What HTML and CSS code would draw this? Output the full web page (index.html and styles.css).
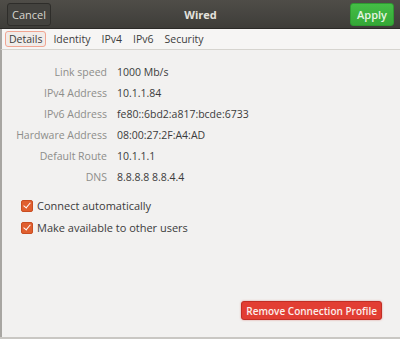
FILE: index.html
```html
<!DOCTYPE html>
<html lang="en">
<head>
    <meta charset="UTF-8">
    <title>Wired</title>
    <link rel="stylesheet" href="styles.css">
</head>
<body>
    <div class="window">
        <div class="headerbar">
            <button class="hb-btn btn-cancel">Cancel</button>
            <div class="title">Wired</div>
            <button class="hb-btn btn-apply">Apply</button>
        </div>
        <div class="tabs">
            <span class="tab active">Details</span>
            <span class="tab">Identity</span>
            <span class="tab">IPv4</span>
            <span class="tab">IPv6</span>
            <span class="tab">Security</span>
        </div>
        <div class="content">
            <div class="details">
                <div class="label">Link speed</div><div class="value">1000 Mb/s</div>
                <div class="label">IPv4 Address</div><div class="value">10.1.1.84</div>
                <div class="label">IPv6 Address</div><div class="value">fe80::6bd2:a817:bcde:6733</div>
                <div class="label">Hardware Address</div><div class="value">08:00:27:2F:A4:AD</div>
                <div class="label">Default Route</div><div class="value">10.1.1.1</div>
                <div class="label">DNS</div><div class="value">8.8.8.8 8.8.4.4</div>
            </div>
            <div class="checks">
                <label class="check"><span class="box"></span>Connect automatically</label>
                <label class="check"><span class="box"></span>Make available to other users</label>
            </div>
            <div class="footer">
                <button class="btn-remove">Remove Connection Profile</button>
            </div>
        </div>
    </div>
</body>
</html>
```

FILE: styles.css
```css
html, body {
    margin: 0;
    padding: 0;
}

body {
    width: 400px;
    height: 339px;
    background: #f2f1f0;
    font-family: "Open Sans", "DejaVu Sans", sans-serif;
    font-size: 10.5px;
    overflow: hidden;
}

.window {
    height: 339px;
    display: flex;
    flex-direction: column;
    box-sizing: border-box;
    border-bottom: 2px solid #c9c7c3;
}

.headerbar {
    height: 29px;
    display: flex;
    align-items: center;
    justify-content: space-between;
    padding: 0 6px 0 7px;
    background: linear-gradient(#4f4d48, #3e3d39);
    border-bottom: 1px solid #2b2a27;
    box-sizing: border-box;
    flex-shrink: 0;
}

.hb-btn {
    height: 23px;
    border-radius: 3px;
    font-family: inherit;
    font-size: 11px;
    padding: 0;
    margin-top: 1px;
}

.btn-cancel {
    background: #43423e;
    color: #d8d6d0;
    border: 1px solid #2e2d2a;
    width: 44px;
}

.btn-apply {
    background: linear-gradient(#44be46, #35a837);
    color: #e6f5e3;
    border: 1px solid #2f9a31;
    width: 44px;
    font-weight: 600;
}

.title {
    color: #e4e2dd;
    font-weight: 700;
    font-size: 11px;
}

.tabs {
    height: 20px;
    display: flex;
    align-items: center;
    gap: 3px;
    padding-left: 3px;
    background: #f6f5f4;
    border-bottom: 1px solid #d6d4cf;
    border-left: 2px solid #a8a6a2;
    flex-shrink: 0;
}

.tab {
    color: #3c3c3c;
    padding: 0 3px;
    line-height: 14px;
    border: 1px solid transparent;
    border-radius: 3px;
}

.tab.active {
    border-color: #f1a592;
    background: #f1ece9;
}

.content {
    flex: 1;
    display: flex;
    flex-direction: column;
    border-left: 2px solid #a8a6a2;
}

.details {
    display: grid;
    grid-template-columns: 105px auto;
    column-gap: 10px;
    row-gap: 6px;
    margin-top: 15px;
    line-height: 15px;
}

.label {
    text-align: right;
    color: #8d8d8a;
}

.value {
    color: #3b3b3b;
}

.checks {
    display: flex;
    flex-direction: column;
    gap: 7px;
    margin-top: 13px;
    padding-left: 19px;
}

.check {
    display: flex;
    align-items: center;
    gap: 4px;
    color: #3b3b3b;
    font-size: 11px;
    line-height: 15px;
}

.box {
    width: 10px;
    height: 10px;
    border-radius: 2px;
    background: #e05f2f;
    border: 1px solid #c94e22;
    position: relative;
}

.box::after {
    content: "";
    position: absolute;
    left: 3px;
    top: 0px;
    width: 3px;
    height: 6px;
    border: solid #fff;
    border-width: 0 1.5px 1.5px 0;
    transform: rotate(40deg);
}

.footer {
    margin-top: auto;
    display: flex;
    justify-content: flex-end;
    padding: 0 18px 17px 0;
}

.btn-remove {
    height: 19px;
    padding: 0 4px;
    background: #e23e33;
    color: #fbeeec;
    border: 1px solid #c22e25;
    border-radius: 3px;
    font-family: inherit;
    font-size: 10px;
    font-weight: 600;
    box-shadow: 0 0 2px rgba(200, 40, 30, 0.5);
}
```
